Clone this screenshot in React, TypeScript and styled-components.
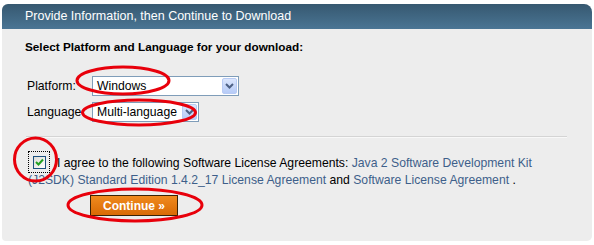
import React from "react";
import styled, { createGlobalStyle } from "styled-components";

const GlobalStyle = createGlobalStyle`
  html, body {
    margin: 0;
    padding: 0;
    background: #ffffff;
    font-family: "Liberation Sans", Arial, sans-serif;
  }
`;

const Page = styled.div`
  position: relative;
  width: 594px;
  height: 245px;
  padding: 4px 2px 0 2px;
  box-sizing: border-box;
`;

const Panel = styled.div`
  width: 590px;
  height: 237px;
  background: #ededed;
  border-radius: 6px 8px 5px 4px;
  overflow: hidden;
  display: flex;
  flex-direction: column;
`;

const Header = styled.div`
  height: 25px;
  line-height: 25px;
  padding-left: 23px;
  color: #ffffff;
  font-size: 12.5px;
  background: linear-gradient(#365870, #4a7594);
`;

const Body = styled.div`
  padding: 10px 25px 0 23px;
  display: flex;
  flex-direction: column;
`;

const Title = styled.div`
  font-size: 11.75px;
  font-weight: bold;
  color: #000;
  height: 15px;
  line-height: 15px;
`;

const FormGrid = styled.div`
  margin-top: 22px;
  padding-left: 2px;
  display: grid;
  grid-template-columns: 65px auto;
  row-gap: 6px;
  align-items: center;
  justify-items: start;
`;

const Label = styled.span`
  font-size: 12.2px;
  color: #000;
`;

const Select = styled.div<{ $width: number }>`
  width: ${({ $width }) => $width}px;
  height: 20px;
  box-sizing: border-box;
  border: 1px solid #7f9db9;
  background: #fff;
  display: flex;
  align-items: center;
  justify-content: space-between;
  padding: 0 1px 0 4px;
  font-size: 12.2px;
  color: #000;
`;

const Arrow = styled.div`
  width: 15px;
  height: 16px;
  box-sizing: border-box;
  border: 1px solid #b8cbf4;
  border-radius: 2px;
  background: linear-gradient(#dbe6fd, #b6cbf7);
  display: flex;
  align-items: center;
  justify-content: center;
`;

const Rule = styled.div`
  margin: 14px 0 0 1px;
  height: 2px;
  background: #d4d4d4;
  border-bottom: 1px solid #f8f8f8;
  box-sizing: border-box;
`;

const Agreement = styled.p`
  margin: 17px 0 0 3px;
  font-size: 12.2px;
  line-height: 17px;
  color: #000;
`;

const Focus = styled.span`
  display: inline-flex;
  align-items: center;
  justify-content: center;
  width: 22px;
  height: 22px;
  box-sizing: border-box;
  border: 1px dotted #000;
  vertical-align: top;
  margin: -4px 7px -2px 0;
`;

const Box = styled.span`
  width: 13px;
  height: 13px;
  box-sizing: border-box;
  border: 1px solid #1c5180;
  background: linear-gradient(135deg, #dcdcd7, #ffffff);
  display: flex;
  align-items: center;
  justify-content: center;
`;

const Link = styled.a`
  color: #3e5f8a;
  text-decoration: none;
`;

const Button = styled.button`
  margin: 6px 0 0 65px;
  align-self: flex-start;
  width: 88px;
  height: 21px;
  border: 1px solid #3a2206;
  background: linear-gradient(#f08a1e, #d96a05);
  color: #fff;
  font-family: inherit;
  font-weight: bold;
  font-size: 12px;
  padding: 0;
  cursor: pointer;
`;

const Overlay = styled.svg`
  position: absolute;
  left: 0;
  top: 0;
  pointer-events: none;
`;

const Chevron = () => (
  <svg width="9" height="6" viewBox="0 0 9 6">
    <path d="M1 1 L4.5 4.5 L8 1" fill="none" stroke="#4d6185" strokeWidth="2" />
  </svg>
);

const marks = [
  { cx: 123, cy: 80.5, rx: 46, ry: 13.5 },
  { cx: 139, cy: 112.5, rx: 56.5, ry: 12.5 },
  { cx: 35.5, cy: 159.5, rx: 21, ry: 21.5 },
  { cx: 135, cy: 205, rx: 67, ry: 16 },
];

export default function App() {
  return (
    <>
      <GlobalStyle />
      <Page>
        <Panel>
          <Header>Provide Information, then Continue to Download</Header>
          <Body>
            <Title>Select Platform and Language for your download:</Title>
            <FormGrid>
              <Label>Platform:</Label>
              <Select $width={147}>
                Windows
                <Arrow>
                  <Chevron />
                </Arrow>
              </Select>
              <Label>Language</Label>
              <Select $width={107}>
                Multi-language
                <Arrow>
                  <Chevron />
                </Arrow>
              </Select>
            </FormGrid>
            <Rule />
            <Agreement>
              <Focus>
                <Box>
                  <svg width="9" height="8" viewBox="0 0 9 8">
                    <path d="M1 4 L3.5 6.5 L8 1.5" fill="none" stroke="#21a121" strokeWidth="2" />
                  </svg>
                </Box>
              </Focus>
              I agree to the following Software License Agreements:{" "}
              <Link href="#">
                Java 2 Software Development Kit (J2SDK) Standard Edition 1.4.2_17 License Agreement
              </Link>{" "}
              and <Link href="#">Software License Agreement</Link> .
            </Agreement>
            <Button>Continue »</Button>
          </Body>
        </Panel>
        <Overlay width="594" height="245">
          {marks.map((m, i) => (
            <ellipse key={i} {...m} fill="none" stroke="#e8000b" strokeWidth="3" />
          ))}
        </Overlay>
      </Page>
    </>
  );
}
